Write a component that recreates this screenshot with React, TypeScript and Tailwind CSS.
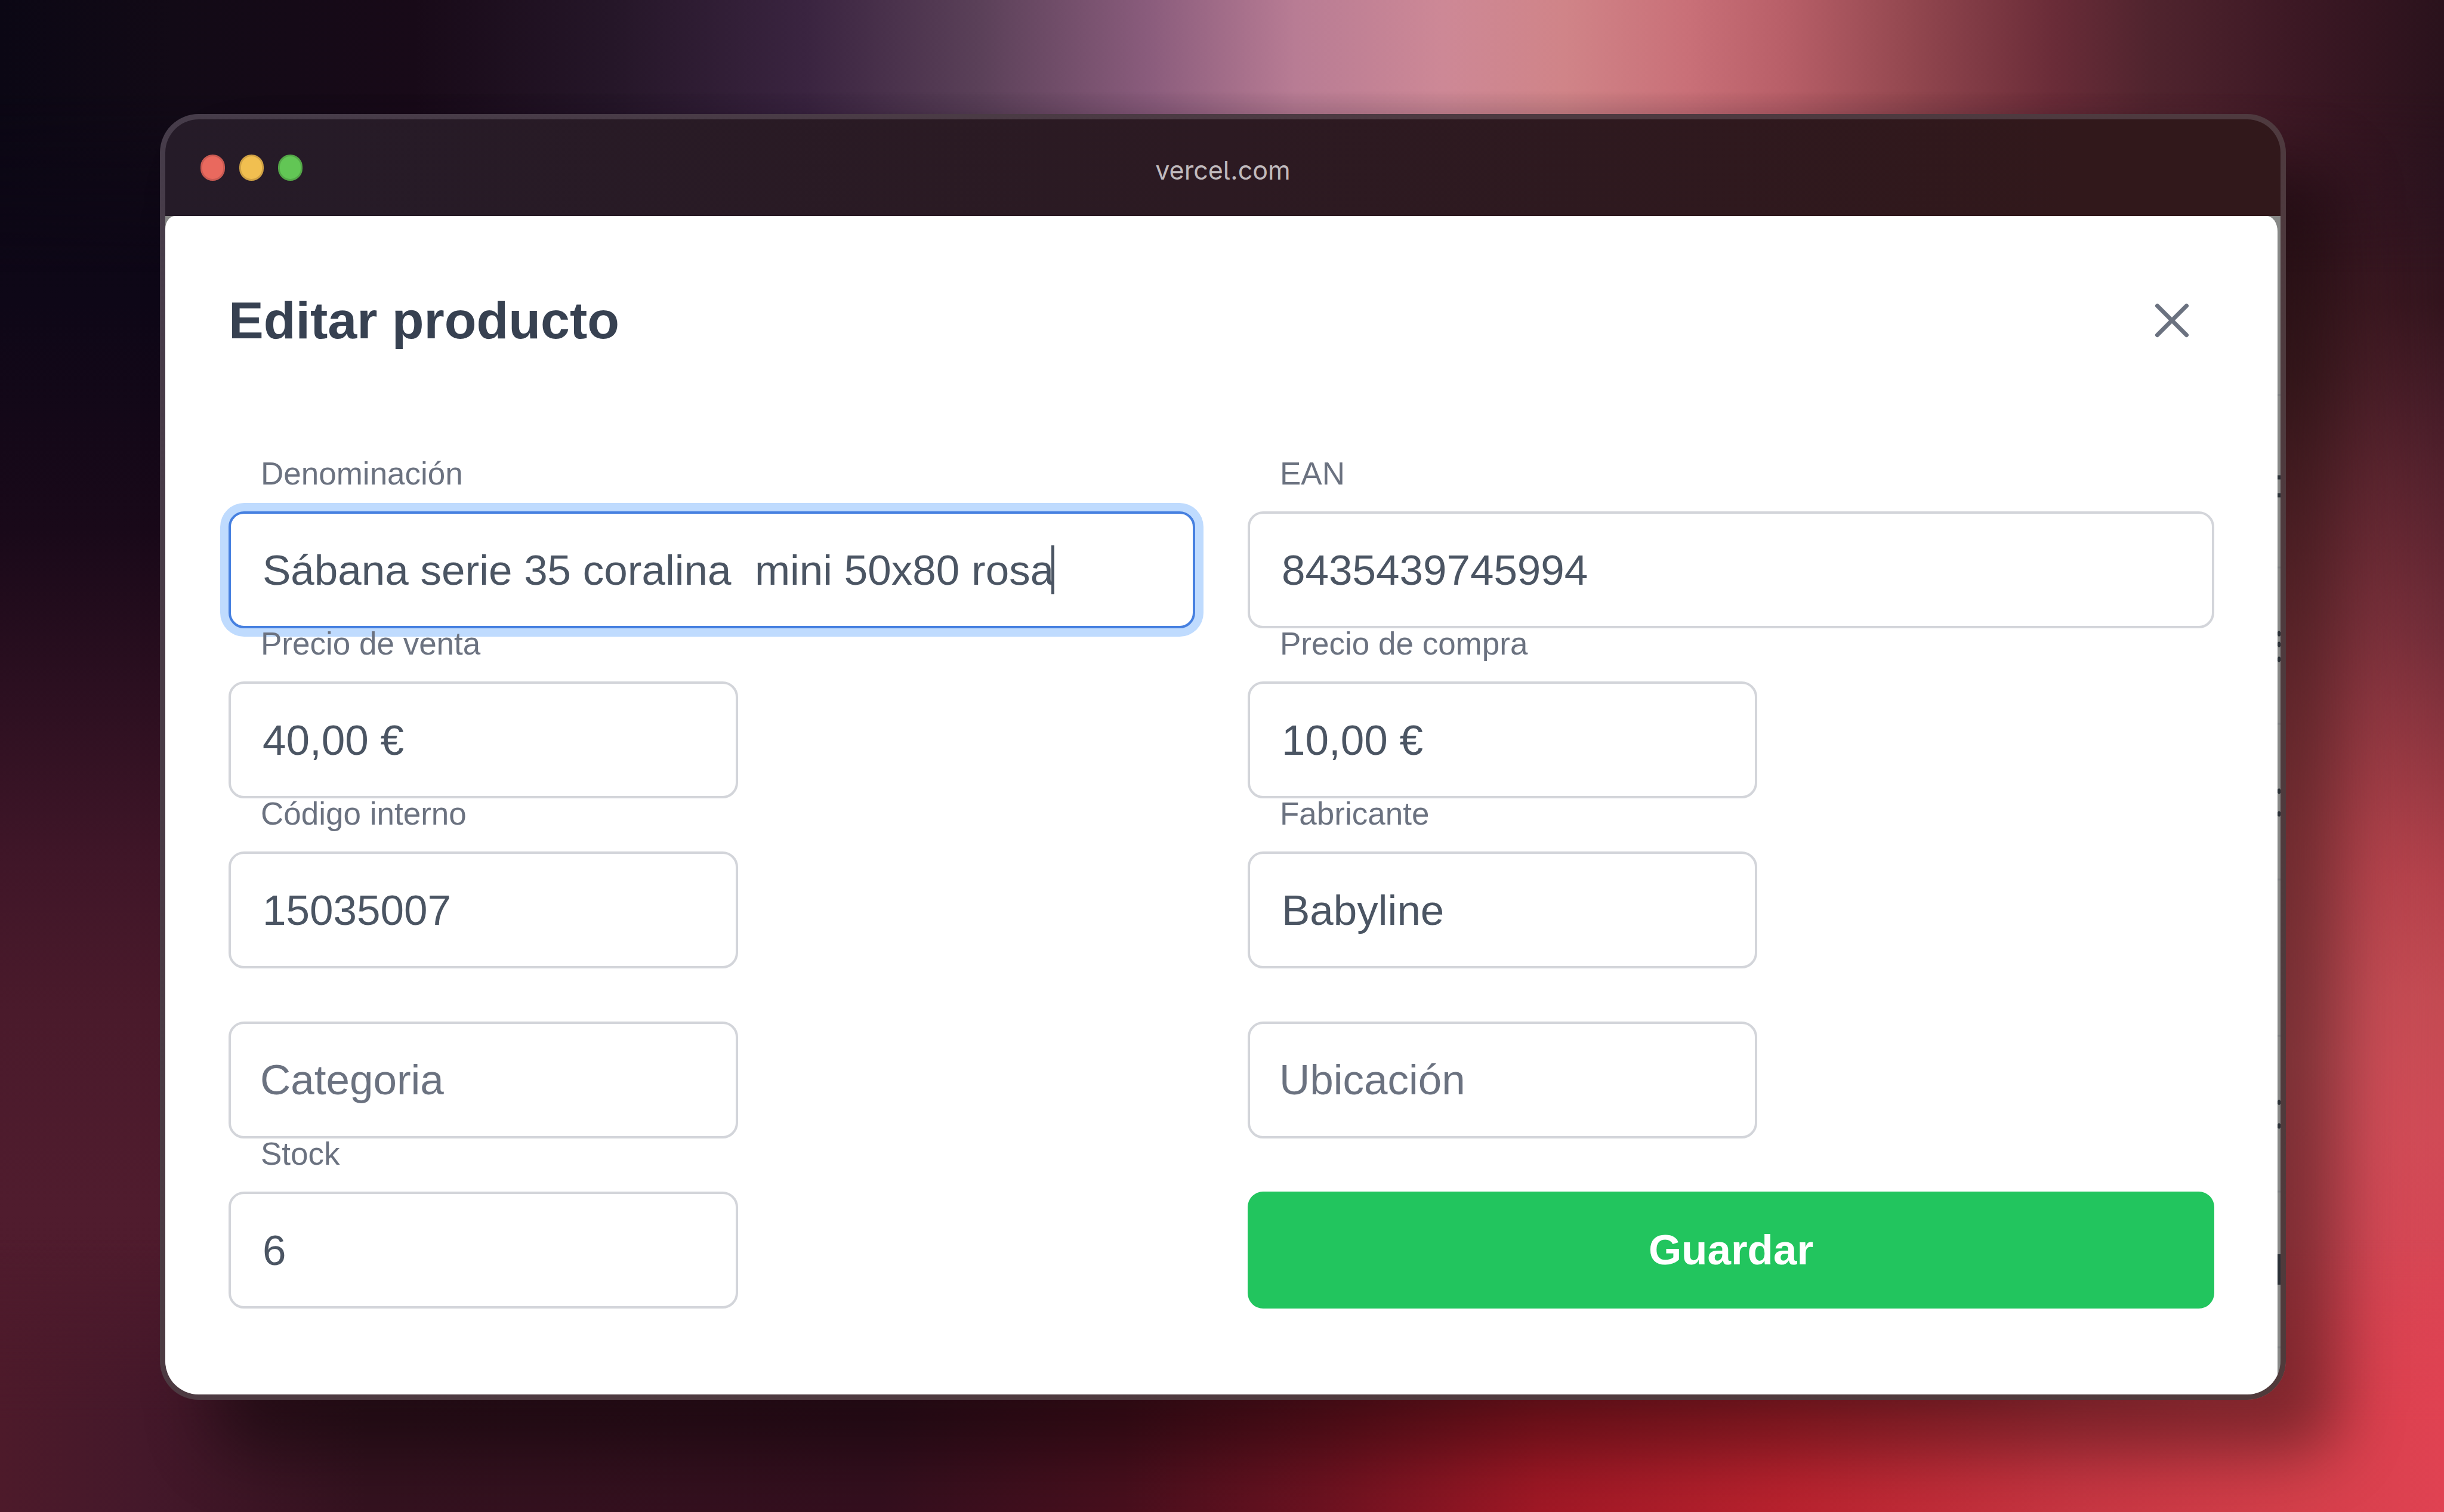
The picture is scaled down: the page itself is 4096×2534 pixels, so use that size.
import React from "react";

type FieldProps = {
  id: string;
  label: string;
  value?: string;
  wide?: boolean;
  focused?: boolean;
};

/** A text box with its floating label; an empty field shows the label inside the box. */
function Field({ id, label, value, wide, focused }: FieldProps) {
  const filled = value !== undefined;
  return (
    <div className={filled ? "flex flex-col" : "flex flex-col pt-[89px]"}>
      {filled && (
        <label htmlFor={id} className="relative block h-[89px] px-[54px] text-[53px] leading-[52px] text-[#6b7280]">
          {label}
        </label>
      )}
      <div className={wide ? "relative w-full" : "relative w-[calc(50%+44px)]"}>
        <input
          id={id}
          type="text"
          defaultValue={value}
          className={`block h-[196px] w-full rounded-[26px] border-4 bg-white px-[53px] text-[71px] leading-[88px] text-[#4b5563] outline-none ${
            focused ? "border-[#4680e0] ring-[14px] ring-[#bfdbfe]" : "border-[#d3d5da]"
          }`}
        />
        {!filled && (
          <label
            htmlFor={id}
            className="pointer-events-none absolute inset-0 flex items-center px-[53px] text-[71px] leading-[88px] text-[#6b7280]"
          >
            {label}
          </label>
        )}
        {focused && (
          <span aria-hidden="true" className="absolute top-[57px] left-[1379px] h-[82px] w-[5px] bg-[#4b5563]" />
        )}
      </div>
    </div>
  );
}

/** Soft dark-to-red wallpaper built from blended edge gradients. */
function Wallpaper() {
  return (
    <div aria-hidden="true" className="absolute inset-0 overflow-hidden">
      <div className="absolute inset-0 bg-[linear-gradient(to_bottom,#0b0714_0%,#0e0717_20%,#190919_35%,#2e1021_47%,#401628_57%,#4a1a2b_67%,#501c2e_80%,#4c192a_100%)]" />
      <div className="absolute inset-0 bg-[linear-gradient(to_bottom,#3a1622_0%,#3c1722_13%,#54242a_25%,#7a323a_35%,#9c3e46_45%,#b8484f_55%,#cc525a_70%,#d64854_90%,#dc4250_100%)] [mask-image:linear-gradient(to_right,transparent_80%,black_90%)]" />
      <div className="absolute inset-0 bg-[linear-gradient(to_bottom,#221019_0%,#2c1420_12%,#32141d_20%,#461c28_27%,#5c2430_35%,#702c38_42%,#903640_50%,#b2404a_58%,#c34a52_66%,#d04a56_75%,#d84554_85%,#e04252_100%)] [mask-image:linear-gradient(to_right,transparent_93%,black_100%)]" />
      <div className="absolute inset-0 bg-[linear-gradient(to_right,#0b0714_0%,#120a16_7%,#180a18_17%,#251628_25%,#3a2440_33%,#5a4058_40%,#8a5c7c_47%,#b87c94_53%,#cd8896_59%,#d08488_64%,#c97078_69%,#b85f68_73%,#944850_78%,#6a2c38_84%,#50242e_88%,#3c1824_94%,#2a121c_100%)] [mask-image:linear-gradient(to_bottom,black_6%,transparent_18%)]" />
      <div className="absolute inset-0 bg-[linear-gradient(to_right,#4d1a2a_0%,#44182a_6%,#34121f_15%,#340f1e_36%,#480f1d_46%,#6c1220_54%,#a01825_63%,#b9222e_73%,#c83642_85%,#d43f4a_94%,#e04252_100%)] [mask-image:linear-gradient(to_bottom,transparent_82%,black_94%)]" />
    </div>
  );
}

/** Sliver of the dimmed page that stays visible to the right of the dialog. */
function BackdropEdge() {
  return (
    <svg aria-hidden="true" viewBox="0 0 5 1975" preserveAspectRatio="none" className="absolute top-0 right-0 h-full w-[5px]">
      <g stroke="#7b7d7f" strokeWidth="3">
        <path d="M0 300H5M0 589H5M0 851H5M0 1112H5M0 1374H5M0 1635H5M0 1896H5" />
      </g>
      <g stroke="#2b3137" strokeWidth="7">
        <path d="M0 438H5M0 468H5" />
        <path d="M0 697L5 703M0 715L5 721M0 746L5 740" />
        <path d="M0 961L5 967M0 1005L5 999" />
        <path d="M0 1483L5 1488M0 1528L5 1522" />
      </g>
      <rect x="0" y="1740" width="5" height="51" fill="#2b3137" />
    </svg>
  );
}

export default function App() {
  return (
    <div className="relative min-h-screen pt-[191px] pr-[265px] pb-[188px] pl-[268px] font-['Liberation_Sans',Arial,sans-serif]">
      <Wallpaper />
      <div className="relative rounded-[65px] bg-[linear-gradient(135deg,#463c4a_0%,#4d3a41_40%,#503a3b_100%)] p-[9px] shadow-[88px_88px_110px_rgba(0,0,0,0.4)]">
        <div className="overflow-hidden rounded-[56px]">
          <header className="grid h-[162px] grid-cols-3 items-center bg-[linear-gradient(to_right,#251b28_0%,#2c1a22_50%,#31181b_90%)]">
            <div className="flex gap-6 pl-[59px]">
              <span className="h-[44px] w-[41px] rounded-full border-[3px] border-[#c95a52] bg-[#e9695e]" />
              <span className="h-[44px] w-[41px] rounded-full border-[3px] border-[#cfa144] bg-[#f1bf50]" />
              <span className="h-[44px] w-[41px] rounded-full border-[3px] border-[#53a647] bg-[#62c655]" />
            </div>
            <p className="pt-2 text-center font-['Inter',sans-serif] text-[43px] leading-[52px] text-[#c0babd] [font-feature-settings:'cv05']">
              vercel.com
            </p>
          </header>

          <div className="relative bg-[#878887] pr-[5px]">
            <BackdropEdge />
            <main className="rounded-tl-[16px_22px] rounded-tr-[18px_26px] bg-white px-[106px] pt-[104px] pb-[144px]">
              <div className="flex items-center justify-between">
                <h1 className="text-[88px] leading-[106px] font-bold text-[#374151]">Editar producto</h1>
                <button type="button" aria-label="Cerrar" className="flex size-[142px] items-center justify-center rounded-full text-[#6b7280]">
                  <svg viewBox="0 0 24 24" fill="none" stroke="currentColor" strokeWidth="1.7" strokeLinecap="round" className="size-[98px]">
                    <path d="M6 18L18 6M6 6l12 12" />
                  </svg>
                </button>
              </div>

              <form className="grid grid-cols-2 gap-x-[88px] pt-[160px]" onSubmit={(e) => e.preventDefault()}>
                <Field id="denominacion" label="Denominación" value="Sábana serie 35 coralina  mini 50x80 rosa" wide focused />
                <Field id="ean" label="EAN" value="8435439745994" wide />
                <Field id="precio-venta" label="Precio de venta" value="40,00 €" />
                <Field id="precio-compra" label="Precio de compra" value="10,00 €" />
                <Field id="codigo" label="Código interno" value="15035007" />
                <Field id="fabricante" label="Fabricante" value="Babyline" />
                <Field id="categoria" label="Categoria" />
                <Field id="ubicacion" label="Ubicación" />
                <Field id="stock" label="Stock" value="6" />
                <button type="submit" className="h-[196px] self-end rounded-[26px] bg-[#22c55e] text-[71px] leading-[88px] font-bold text-white">
                  Guardar
                </button>
              </form>
            </main>
          </div>
        </div>
      </div>
    </div>
  );
}
